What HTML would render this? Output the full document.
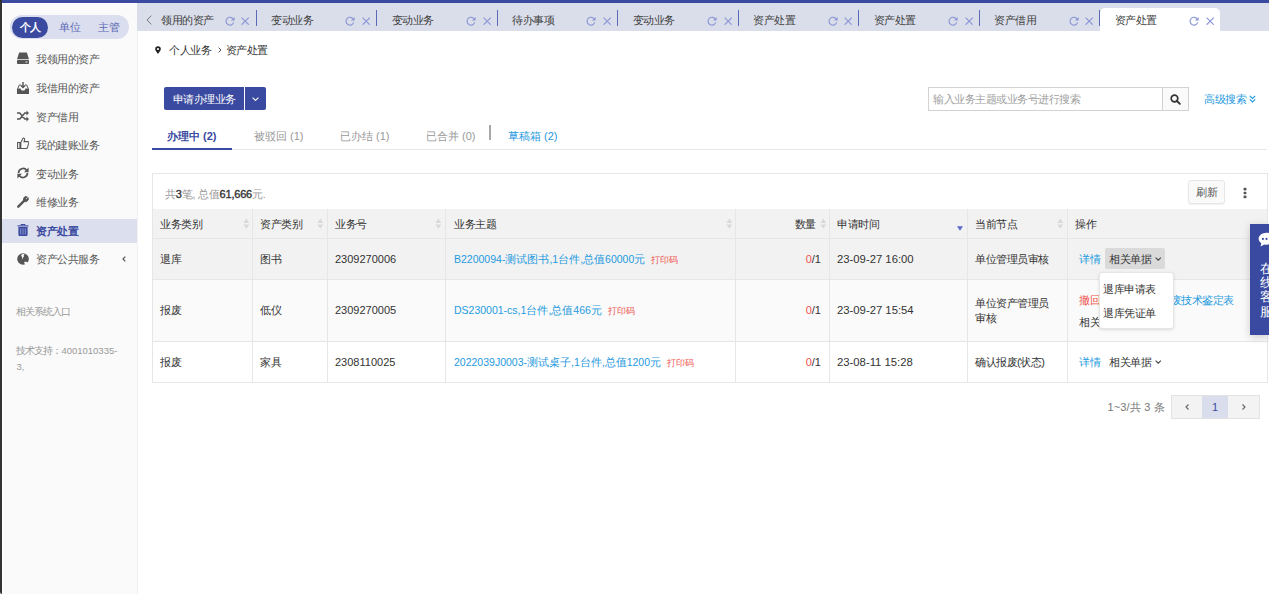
<!DOCTYPE html>
<html><head><meta charset="utf-8">
<style>
*{margin:0;padding:0;box-sizing:border-box}
html,body{width:1269px;height:594px;overflow:hidden;background:#fff;font-family:"Liberation Sans",sans-serif;font-size:10.5px;color:#333}
.a{position:absolute;white-space:nowrap}
.t{position:absolute;white-space:nowrap;line-height:12px;font-size:11px;letter-spacing:-0.5px}
.lnk{color:#1f9ae0}
.red{color:#f0524d}
.num{font-size:11px;letter-spacing:0}
.mix{font-size:10.5px;letter-spacing:0}
</style></head><body>
<div class="a" style="left:2px;top:3px;width:135px;height:591px;background:#fafafa;border-left:1px solid #fff;border-top:1px solid #fff"></div>
<div class="a" style="left:137px;top:3px;width:1px;height:591px;background:#f1f1f1"></div>
<div class="a" style="left:0;top:0;width:1269px;height:2.5px;background:#3a4aa0"></div>
<div class="a" style="left:0;top:0;width:2px;height:594px;background:#333;border-bottom-left-radius:3px"></div>
<div class="a" style="left:10px;top:15px;width:119px;height:24px;border-radius:12px;background:#dadeee"></div>
<div class="a" style="left:12px;top:16.5px;width:36px;height:21px;border-radius:11px;background:#3a4aa0"></div>
<div class="t" style="left:19.5px;top:20.5px;color:#fff;font-weight:bold">个人</div>
<div class="t" style="left:59px;top:21px;color:#5a68b4">单位</div>
<div class="t" style="left:98px;top:21px;color:#5a68b4">主管</div>
<svg class="a" style="left:16.5px;top:51.5px;width:12px;height:12px" viewBox="0 0 12 12"><path d="M2.2 0.5h7.6l2.2 6.8H0z" fill="#555"/><rect x="0" y="8" width="12" height="4" rx="0.8" fill="#555"/><rect x="8.5" y="9.5" width="2" height="1" fill="#fafafa"/></svg>
<div class="t" style="left:36px;top:53px;color:#585858">我领用的资产</div>
<svg class="a" style="left:16.5px;top:81.5px;width:12px;height:12px" viewBox="0 0 12 12"><path d="M0 6.5h3.5l1 2h3l1-2H12V12H0z" fill="#555"/><path d="M0.8 6.5l1.5-3.5h1.8M7.9 3h1.8l1.5 3.5" stroke="#555" fill="none" stroke-width="1"/><path d="M6 0v5.5M4 3.5l2 2 2-2" stroke="#555" fill="none" stroke-width="1.4"/></svg>
<div class="t" style="left:36px;top:82px;color:#585858">我借用的资产</div>
<svg class="a" style="left:16.5px;top:110.0px;width:12px;height:12px" viewBox="0 0 12 12"><path d="M0 3h2.8l5 6h2.2M0 9h2.8l5-6h2.2" stroke="#555" fill="none" stroke-width="1.5"/><path d="M9.5 0.6l2.5 2.4-2.5 2.4zM9.5 6.6l2.5 2.4-2.5 2.4z" fill="#555"/></svg>
<div class="t" style="left:36px;top:110.5px;color:#585858">资产借用</div>
<svg class="a" style="left:16.5px;top:137.0px;width:12px;height:12px" viewBox="0 0 12 12"><path d="M0.6 5.5h2.3v6H0.6z M3.8 11.5V5.5l2.3-4.6c1.3 0 1.8.9 1.4 2.2L7 4.6h4c.8 0 1 .6.8 1.2l-1.5 5c-.2.5-.5.7-1 .7z" stroke="#555" fill="none" stroke-width="1.05"/></svg>
<div class="t" style="left:36px;top:139px;color:#585858">我的建账业务</div>
<svg class="a" style="left:16.5px;top:167.0px;width:12px;height:12px" viewBox="0 0 12 12"><path d="M1.5 6A4.6 4.6 0 0 1 9.8 3.4M10.5 6A4.6 4.6 0 0 1 2.2 8.6" stroke="#555" fill="none" stroke-width="1.7"/><path d="M11.6 0.6v4.6H7z M0.4 11.4V6.8H5z" fill="#555"/></svg>
<div class="t" style="left:36px;top:167.5px;color:#585858">变动业务</div>
<svg class="a" style="left:16.5px;top:195.5px;width:12px;height:12px" viewBox="0 0 12 12"><path d="M1.3 10.7l5.5-5.5" stroke="#555" stroke-width="2.4" stroke-linecap="round"/><path d="M6.5 2.5a2.8 2.8 0 0 1 3.8-1.6L8.5 2.7l.8.8 1.8-1.8a2.8 2.8 0 0 1-4.3 3.3z" fill="#555" stroke="#555" stroke-width="1"/></svg>
<div class="t" style="left:36px;top:196px;color:#585858">维修业务</div>
<div class="a" style="left:2px;top:218.5px;width:135px;height:24px;background:#dcdfee"></div>
<svg class="a" style="left:16.5px;top:224.0px;width:12px;height:12px" viewBox="0 0 12 12"><path d="M0.5 1.9h11" stroke="#3a4aa0" stroke-width="1.1"/><path d="M4 1.6V0.5h4v1.1" stroke="#3a4aa0" fill="none" stroke-width="1"/><path d="M1.4 3.1h9.2v8c0 .5-.3.8-.8.8H2.2c-.5 0-.8-.3-.8-.8z" fill="#3a4aa0"/><path d="M3.7 4.3v6.4M6 4.3v6.4M8.3 4.3v6.4" stroke="#aab2dc" stroke-width="0.7"/></svg>
<div class="t" style="left:36px;top:224.5px;color:#3a4aa0;font-weight:bold">资产处置</div>
<svg class="a" style="left:16.5px;top:252.5px;width:12px;height:12px" viewBox="0 0 12 12"><circle cx="6" cy="6" r="5.8" fill="#555"/><path d="M5.2 1.2c-.9.5-1.3 1.3-.8 2 .5.6.9.5.7 1.3-.2.8.1 1.5.6 1.9l.1-1.7c.4-.4.9-.3 1.1-.9.1-.5-.4-.7-.2-1.1.2-.4.7-.6.8-1.1-.7-.5-1.5-.6-2.3-.4zM7.3 9c.7-.5 1.7-.5 2.5.1.5.4 1.1.3 1.1.3-.6 1.2-1.8 2-3.1 2.1.2-.7-.8-1.5-.5-2.5z" fill="#fafafa"/></svg>
<div class="t" style="left:36px;top:253px;color:#585858">资产公共服务</div>
<svg class="a" style="left:122px;top:256px;width:4px;height:6px" viewBox="0 0 4 6"><path d="M3.3 0.6L1 3l2.3 2.4" stroke="#555" stroke-width="1.2" fill="none"/></svg>
<div class="t" style="left:16.4px;top:305.5px;color:#999;font-size:9.5px;letter-spacing:-1px">相关系统入口</div>
<div class="a" style="left:16.4px;top:343px;color:#999;font-size:9.5px;line-height:16.4px"><span style="letter-spacing:-1px">技术支持：</span>4001010335-<br>3,</div>
<div class="a" style="left:137px;top:2.5px;width:1132px;height:28.5px;background:#dadeea"></div>
<svg class="a" style="left:146px;top:15px;width:6px;height:10px" viewBox="0 0 6 10"><path d="M5.3 0.6L1 5l4.3 4.4" stroke="#777" fill="none" stroke-width="1"/></svg>
<div class="t" style="left:161.0px;top:13.7px;color:#404040">领用的资产</div>
<svg class="a" style="left:224.8px;top:15.8px;width:10px;height:10px" viewBox="0 0 10 10"><path d="M8.4 3.3A3.9 3.9 0 1 0 8.7 6.4" stroke="#8d98d6" stroke-width="1.15" fill="none"/><path d="M9.6 0.9v3.7H5.9z" fill="#8d98d6"/></svg>
<svg class="a" style="left:241.4px;top:16.6px;width:8.4px;height:8.4px" viewBox="0 0 8 8"><path d="M0.6 0.6l6.8 6.8M7.4 0.6L0.6 7.4" stroke="#8d98d6" stroke-width="1.1"/></svg>
<div class="a" style="left:255.6px;top:10px;width:1px;height:15.5px;background:#5b6ab8"></div>
<div class="t" style="left:271.1px;top:13.7px;color:#404040">变动业务</div>
<svg class="a" style="left:345.3px;top:15.8px;width:10px;height:10px" viewBox="0 0 10 10"><path d="M8.4 3.3A3.9 3.9 0 1 0 8.7 6.4" stroke="#8d98d6" stroke-width="1.15" fill="none"/><path d="M9.6 0.9v3.7H5.9z" fill="#8d98d6"/></svg>
<svg class="a" style="left:361.9px;top:16.6px;width:8.4px;height:8.4px" viewBox="0 0 8 8"><path d="M0.6 0.6l6.8 6.8M7.4 0.6L0.6 7.4" stroke="#8d98d6" stroke-width="1.1"/></svg>
<div class="a" style="left:376.1px;top:10px;width:1px;height:15.5px;background:#5b6ab8"></div>
<div class="t" style="left:391.6px;top:13.7px;color:#404040">变动业务</div>
<svg class="a" style="left:465.9px;top:15.8px;width:10px;height:10px" viewBox="0 0 10 10"><path d="M8.4 3.3A3.9 3.9 0 1 0 8.7 6.4" stroke="#8d98d6" stroke-width="1.15" fill="none"/><path d="M9.6 0.9v3.7H5.9z" fill="#8d98d6"/></svg>
<svg class="a" style="left:482.5px;top:16.6px;width:8.4px;height:8.4px" viewBox="0 0 8 8"><path d="M0.6 0.6l6.8 6.8M7.4 0.6L0.6 7.4" stroke="#8d98d6" stroke-width="1.1"/></svg>
<div class="a" style="left:496.6px;top:10px;width:1px;height:15.5px;background:#5b6ab8"></div>
<div class="t" style="left:512.1px;top:13.7px;color:#404040">待办事项</div>
<svg class="a" style="left:586.4px;top:15.8px;width:10px;height:10px" viewBox="0 0 10 10"><path d="M8.4 3.3A3.9 3.9 0 1 0 8.7 6.4" stroke="#8d98d6" stroke-width="1.15" fill="none"/><path d="M9.6 0.9v3.7H5.9z" fill="#8d98d6"/></svg>
<svg class="a" style="left:603.0px;top:16.6px;width:8.4px;height:8.4px" viewBox="0 0 8 8"><path d="M0.6 0.6l6.8 6.8M7.4 0.6L0.6 7.4" stroke="#8d98d6" stroke-width="1.1"/></svg>
<div class="a" style="left:617.2px;top:10px;width:1px;height:15.5px;background:#5b6ab8"></div>
<div class="t" style="left:632.7px;top:13.7px;color:#404040">变动业务</div>
<svg class="a" style="left:707.0px;top:15.8px;width:10px;height:10px" viewBox="0 0 10 10"><path d="M8.4 3.3A3.9 3.9 0 1 0 8.7 6.4" stroke="#8d98d6" stroke-width="1.15" fill="none"/><path d="M9.6 0.9v3.7H5.9z" fill="#8d98d6"/></svg>
<svg class="a" style="left:723.5px;top:16.6px;width:8.4px;height:8.4px" viewBox="0 0 8 8"><path d="M0.6 0.6l6.8 6.8M7.4 0.6L0.6 7.4" stroke="#8d98d6" stroke-width="1.1"/></svg>
<div class="a" style="left:737.8px;top:10px;width:1px;height:15.5px;background:#5b6ab8"></div>
<div class="t" style="left:753.2px;top:13.7px;color:#404040">资产处置</div>
<svg class="a" style="left:827.5px;top:15.8px;width:10px;height:10px" viewBox="0 0 10 10"><path d="M8.4 3.3A3.9 3.9 0 1 0 8.7 6.4" stroke="#8d98d6" stroke-width="1.15" fill="none"/><path d="M9.6 0.9v3.7H5.9z" fill="#8d98d6"/></svg>
<svg class="a" style="left:844.1px;top:16.6px;width:8.4px;height:8.4px" viewBox="0 0 8 8"><path d="M0.6 0.6l6.8 6.8M7.4 0.6L0.6 7.4" stroke="#8d98d6" stroke-width="1.1"/></svg>
<div class="a" style="left:858.3px;top:10px;width:1px;height:15.5px;background:#5b6ab8"></div>
<div class="t" style="left:873.8px;top:13.7px;color:#404040">资产处置</div>
<svg class="a" style="left:948.0px;top:15.8px;width:10px;height:10px" viewBox="0 0 10 10"><path d="M8.4 3.3A3.9 3.9 0 1 0 8.7 6.4" stroke="#8d98d6" stroke-width="1.15" fill="none"/><path d="M9.6 0.9v3.7H5.9z" fill="#8d98d6"/></svg>
<svg class="a" style="left:964.6px;top:16.6px;width:8.4px;height:8.4px" viewBox="0 0 8 8"><path d="M0.6 0.6l6.8 6.8M7.4 0.6L0.6 7.4" stroke="#8d98d6" stroke-width="1.1"/></svg>
<div class="a" style="left:978.9px;top:10px;width:1px;height:15.5px;background:#5b6ab8"></div>
<div class="t" style="left:994.4px;top:13.7px;color:#404040">资产借用</div>
<svg class="a" style="left:1068.6px;top:15.8px;width:10px;height:10px" viewBox="0 0 10 10"><path d="M8.4 3.3A3.9 3.9 0 1 0 8.7 6.4" stroke="#8d98d6" stroke-width="1.15" fill="none"/><path d="M9.6 0.9v3.7H5.9z" fill="#8d98d6"/></svg>
<svg class="a" style="left:1085.2px;top:16.6px;width:8.4px;height:8.4px" viewBox="0 0 8 8"><path d="M0.6 0.6l6.8 6.8M7.4 0.6L0.6 7.4" stroke="#8d98d6" stroke-width="1.1"/></svg>
<div class="a" style="left:1100.4px;top:7.7px;width:119.5px;height:23.3px;background:#fff;border-radius:5px 5px 0 0"></div>
<div class="a" style="left:1099.4px;top:10px;width:1px;height:15.5px;background:#5b6ab8"></div>
<div class="t" style="left:1114.9px;top:13.7px;color:#404040">资产处置</div>
<svg class="a" style="left:1189.2px;top:15.8px;width:10px;height:10px" viewBox="0 0 10 10"><path d="M8.4 3.3A3.9 3.9 0 1 0 8.7 6.4" stroke="#8d98d6" stroke-width="1.15" fill="none"/><path d="M9.6 0.9v3.7H5.9z" fill="#8d98d6"/></svg>
<svg class="a" style="left:1205.8px;top:16.6px;width:8.4px;height:8.4px" viewBox="0 0 8 8"><path d="M0.6 0.6l6.8 6.8M7.4 0.6L0.6 7.4" stroke="#8d98d6" stroke-width="1.1"/></svg>
<svg class="a" style="left:155px;top:46px;width:6px;height:8px" viewBox="0 0 6 8"><path d="M3 8C1.6 6 0.2 4.6 0.2 3A2.8 2.8 0 1 1 5.8 3C5.8 4.6 4.4 6 3 8z" fill="#222"/><circle cx="3" cy="3" r="1.1" fill="#fff"/></svg>
<div class="t" style="left:169px;top:43.5px">个人业务</div>
<svg class="a" style="left:218px;top:46.5px;width:4px;height:6px" viewBox="0 0 4 6"><path d="M0.6 0.6L3 3 0.6 5.4" stroke="#555" fill="none" stroke-width="1"/></svg>
<div class="t" style="left:225.8px;top:43.5px">资产处置</div>
<div class="a" style="left:164px;top:87px;width:80px;height:23px;background:#3a4aa0;border-radius:2px 0 0 2px"></div>
<div class="a" style="left:245px;top:87px;width:21px;height:23px;background:#3a4aa0;border-radius:0 2px 2px 0"></div>
<div class="t" style="left:172.5px;top:93px;color:#fff">申请办理业务</div>
<svg class="a" style="left:252px;top:97px;width:7px;height:4px" viewBox="0 0 7 4"><path d="M0.6 0.6l2.9 2.8 2.9-2.8" stroke="#fff" fill="none" stroke-width="1.1"/></svg>
<div class="a" style="left:928px;top:87px;width:235px;height:24px;border:1px solid #d2d2d2;background:#fff"></div>
<div class="t" style="left:933px;top:93px;color:#a0a0a0">输入业务主题或业务号进行搜索</div>
<div class="a" style="left:1162px;top:87px;width:27px;height:24px;border:1px solid #d2d2d2;background:#fafafa"></div>
<svg class="a" style="left:1170px;top:94px;width:11px;height:11px" viewBox="0 0 11 11"><circle cx="4.5" cy="4.5" r="3.3" stroke="#333" stroke-width="1.7" fill="none"/><path d="M7 7l2.8 2.8" stroke="#333" stroke-width="1.9" stroke-linecap="round"/></svg>
<div class="t lnk" style="left:1204px;top:93px">高级搜索</div>
<svg class="a" style="left:1249px;top:95px;width:7px;height:8px" viewBox="0 0 7 8"><path d="M0.8 0.8l2.7 2.6 2.7-2.6M0.8 4.3l2.7 2.6 2.7-2.6" stroke="#1f9ae0" fill="none" stroke-width="1.1"/></svg>
<div class="a" style="left:152px;top:149px;width:1115px;height:1px;background:#e6e6e6"></div>
<div class="a" style="left:152px;top:148px;width:80px;height:2px;background:#3a4aa0"></div>
<div class="t num" style="left:167px;top:129.7px;color:#3a4aa0;font-weight:bold">办理中 (2)</div>
<div class="t num" style="left:254px;top:129.7px;color:#999">被驳回 (1)</div>
<div class="t num" style="left:340px;top:129.7px;color:#999">已办结 (1)</div>
<div class="t num" style="left:426px;top:129.7px;color:#999">已合并 (0)</div>
<div class="a" style="left:489px;top:124.5px;width:1.5px;height:15px;background:#a8a8a8"></div>
<div class="t num lnk" style="left:508px;top:129.7px">草稿箱 (2)</div>
<div class="a" style="left:152px;top:173px;width:1116px;height:210px;border:1px solid #e6e6e6;background:#fff"></div>
<div class="t" style="left:165px;top:188px;color:#999;font-size:10.5px;letter-spacing:-0.2px">共<b style="color:#333;font-size:11px;font-weight:normal;-webkit-text-stroke:0.35px #333">3</b>笔, 总值<b style="color:#333;font-size:11px;font-weight:normal;-webkit-text-stroke:0.35px #333">61,666</b>元.</div>
<div class="a" style="left:1188px;top:180px;width:37px;height:24px;border:1px solid #e6e6e6;border-radius:3px;background:#fafafa;box-shadow:0 1px 1px rgba(0,0,0,.05)"></div>
<div class="t" style="left:1196px;top:185.5px;color:#555">刷新</div>
<svg class="a" style="left:1243px;top:187px;width:4px;height:12px" viewBox="0 0 4 12"><rect x="0.5" y="0.8" width="3" height="2.6" rx="1" fill="#555"/><rect x="0.5" y="4.7" width="3" height="2.6" rx="1" fill="#555"/><rect x="0.5" y="8.6" width="3" height="2.6" rx="1" fill="#555"/></svg>
<div class="a" style="left:153px;top:209px;width:1114px;height:29px;background:#f2f2f2"></div>
<div class="a" style="left:153px;top:239px;width:1114px;height:40px;background:#f2f2f2"></div>
<div class="a" style="left:153px;top:280px;width:1114px;height:61px;background:#fafafa"></div>
<div class="a" style="left:153px;top:342px;width:1114px;height:40px;background:#fff"></div>
<div class="a" style="left:153px;top:238px;width:1114px;height:1px;background:#e6e6e6"></div>
<div class="a" style="left:153px;top:279px;width:1114px;height:1px;background:#e6e6e6"></div>
<div class="a" style="left:153px;top:341px;width:1114px;height:1px;background:#e6e6e6"></div>
<div class="a" style="left:252px;top:209px;width:1px;height:173px;background:#e6e6e6"></div>
<div class="a" style="left:327px;top:209px;width:1px;height:173px;background:#e6e6e6"></div>
<div class="a" style="left:445px;top:209px;width:1px;height:173px;background:#e6e6e6"></div>
<div class="a" style="left:735px;top:209px;width:1px;height:173px;background:#e6e6e6"></div>
<div class="a" style="left:829px;top:209px;width:1px;height:173px;background:#e6e6e6"></div>
<div class="a" style="left:967px;top:209px;width:1px;height:173px;background:#e6e6e6"></div>
<div class="a" style="left:1067px;top:209px;width:1px;height:173px;background:#e6e6e6"></div>
<div class="t " style="left:160px;top:218px;">业务类别</div>
<svg class="a" style="left:243.0px;top:218.3px;width:6.7px;height:11.4px" viewBox="0 0 6 11"><path d="M3 0.5L5.8 4.8H0.2z M3 10.5L5.8 6.2H0.2z" fill="#d9d9d9"/></svg>
<div class="t " style="left:260px;top:218px;">资产类别</div>
<svg class="a" style="left:316.5px;top:218.3px;width:6.7px;height:11.4px" viewBox="0 0 6 11"><path d="M3 0.5L5.8 4.8H0.2z M3 10.5L5.8 6.2H0.2z" fill="#d9d9d9"/></svg>
<div class="t " style="left:335px;top:218px;">业务号</div>
<svg class="a" style="left:434.5px;top:218.3px;width:6.7px;height:11.4px" viewBox="0 0 6 11"><path d="M3 0.5L5.8 4.8H0.2z M3 10.5L5.8 6.2H0.2z" fill="#d9d9d9"/></svg>
<div class="t " style="left:454px;top:218px;">业务主题</div>
<svg class="a" style="left:725.5px;top:218.3px;width:6.7px;height:11.4px" viewBox="0 0 6 11"><path d="M3 0.5L5.8 4.8H0.2z M3 10.5L5.8 6.2H0.2z" fill="#d9d9d9"/></svg>
<div class="t" style="left:760px;width:55.5px;text-align:right;top:218px">数量</div>
<svg class="a" style="left:820.0px;top:218.3px;width:6.7px;height:11.4px" viewBox="0 0 6 11"><path d="M3 0.5L5.8 4.8H0.2z M3 10.5L5.8 6.2H0.2z" fill="#d9d9d9"/></svg>
<div class="t " style="left:837px;top:218px;">申请时间</div>
<svg class="a" style="left:957px;top:226px;width:6px;height:5px" viewBox="0 0 6 5"><path d="M0 0.3h6L3 4.7z" fill="#5a68c8"/></svg>
<div class="t " style="left:975px;top:218px;">当前节点</div>
<svg class="a" style="left:1057.0px;top:218.3px;width:6.7px;height:11.4px" viewBox="0 0 6 11"><path d="M3 0.5L5.8 4.8H0.2z M3 10.5L5.8 6.2H0.2z" fill="#d9d9d9"/></svg>
<div class="t " style="left:1075px;top:218px;">操作</div>
<div class="t " style="left:160px;top:253px;">退库</div>
<div class="t " style="left:260px;top:253px;">图书</div>
<div class="t num" style="left:335px;top:253px;">2309270006</div>
<div class="t lnk mix" style="left:454px;top:253px;">B2200094-测试图书,1台件,总值60000元<span class="red" style="font-size:9px;margin-left:6px">打印码</span></div>
<div class="t num" style="left:760px;width:61px;text-align:right;top:253px"><span class="red">0</span>/1</div>
<div class="t num" style="left:837px;top:253px;font-size:11.3px">23-09-27 16:00</div>
<div class="t " style="left:160px;top:304px;">报废</div>
<div class="t " style="left:260px;top:304px;">低仪</div>
<div class="t num" style="left:335px;top:304px;">2309270005</div>
<div class="t lnk mix" style="left:454px;top:304px;">DS230001-cs,1台件,总值466元<span class="red" style="font-size:9px;margin-left:6px">打印码</span></div>
<div class="t num" style="left:760px;width:61px;text-align:right;top:304px"><span class="red">0</span>/1</div>
<div class="t num" style="left:837px;top:304px;font-size:11.3px">23-09-27 15:54</div>
<div class="t " style="left:160px;top:356px;">报废</div>
<div class="t " style="left:260px;top:356px;">家具</div>
<div class="t num" style="left:335px;top:356px;">2308110025</div>
<div class="t lnk mix" style="left:454px;top:356px;">2022039J0003-测试桌子,1台件,总值1200元<span class="red" style="font-size:9px;margin-left:6px">打印码</span></div>
<div class="t num" style="left:760px;width:61px;text-align:right;top:356px"><span class="red">0</span>/1</div>
<div class="t num" style="left:837px;top:356px;font-size:11.3px">23-08-11 15:28</div>
<div class="t " style="left:975px;top:253px;">单位管理员审核</div>
<div class="t lnk" style="left:1079px;top:253px;">详情</div>
<div class="a" style="left:1105px;top:248px;width:60px;height:21px;background:#dadada;border-radius:2px"></div>
<div class="t " style="left:1109px;top:253px;">相关单据</div>
<svg class="a" style="left:1155px;top:257px;width:6.5px;height:4.2px" viewBox="0 0 6 4"><path d="M0.5 0.5l2.5 2.5 2.5-2.5" stroke="#444" fill="none" stroke-width="1"/></svg>
<div class="t " style="left:975px;top:297px;">单位资产管理员</div>
<div class="t " style="left:975px;top:312px;">审核</div>
<div class="t red" style="left:1079px;top:294px;">撤回</div>
<div class="t lnk" style="left:1160px;top:294px;">报废技术鉴定表</div>
<div class="t " style="left:1079px;top:316px;">相关单据</div>
<svg class="a" style="left:1125px;top:320px;width:6.5px;height:4.2px" viewBox="0 0 6 4"><path d="M0.5 0.5l2.5 2.5 2.5-2.5" stroke="#444" fill="none" stroke-width="1"/></svg>
<div class="t " style="left:975px;top:356px;">确认报废(状态)</div>
<div class="t lnk" style="left:1079px;top:356px;">详情</div>
<div class="t " style="left:1109px;top:356px;">相关单据</div>
<svg class="a" style="left:1155px;top:360px;width:6.5px;height:4.2px" viewBox="0 0 6 4"><path d="M0.5 0.5l2.5 2.5 2.5-2.5" stroke="#444" fill="none" stroke-width="1"/></svg>
<div class="a" style="left:1098.5px;top:271.5px;width:75px;height:57.5px;background:#fff;border:1px solid #e6e6e6;border-radius:3px;box-shadow:0 1px 3px rgba(0,0,0,.12)"></div>
<div class="t " style="left:1103px;top:282.5px;">退库申请表</div>
<div class="t " style="left:1103px;top:306.5px;">退库凭证单</div>
<div class="t mix" style="left:1107.5px;top:401px;color:#777;font-size:11px;letter-spacing:0.15px">1~3/共 3 条</div>
<div class="a" style="left:1171px;top:395px;width:89px;height:24px;border:1px solid #e3e3e3;background:#f3f3f3"></div>
<div class="a" style="left:1202px;top:396px;width:26px;height:22px;background:#d9ddec"></div>
<div class="t num" style="left:1202px;width:26px;text-align:center;top:401px;color:#3a4aa0">1</div>
<svg class="a" style="left:1185px;top:404px;width:4px;height:6px" viewBox="0 0 4 6"><path d="M3.5 0.5L1 3l2.5 2.5" stroke="#666" fill="none" stroke-width="1.1"/></svg>
<svg class="a" style="left:1242px;top:404px;width:4px;height:6px" viewBox="0 0 4 6"><path d="M0.5 0.5L3 3 0.5 5.5" stroke="#666" fill="none" stroke-width="1.1"/></svg>
<div class="a" style="left:1250px;top:224px;width:19px;height:111px;background:#3a4aa0;box-shadow:0 2px 8px rgba(0,0,0,.18)"></div>
<svg class="a" style="left:1258px;top:231.8px;width:17px;height:15.3px" viewBox="0 0 16 14"><path d="M8 0.5C3.9 0.5 0.6 3.1 0.6 6.2c0 1.7 1 3.2 2.5 4.2L2.4 13.5l3.5-2c.7.2 1.4.3 2.1.3 4.1 0 7.4-2.6 7.4-5.7S12.1 0.5 8 0.5z" fill="#fff"/><circle cx="4.6" cy="6.3" r="1" fill="#3a4aa0"/><circle cx="8" cy="6.3" r="1" fill="#3a4aa0"/><circle cx="11.4" cy="6.3" r="1" fill="#3a4aa0"/></svg>
<div class="a" style="left:1259.5px;top:262.3px;line-height:14px;color:#fff;font-size:13px">在</div>
<div class="a" style="left:1259.5px;top:275.8px;line-height:14px;color:#fff;font-size:13px">线</div>
<div class="a" style="left:1259.5px;top:289.9px;line-height:14px;color:#fff;font-size:13px">客</div>
<div class="a" style="left:1259.5px;top:304.8px;line-height:14px;color:#fff;font-size:13px">服</div>
</body></html>
